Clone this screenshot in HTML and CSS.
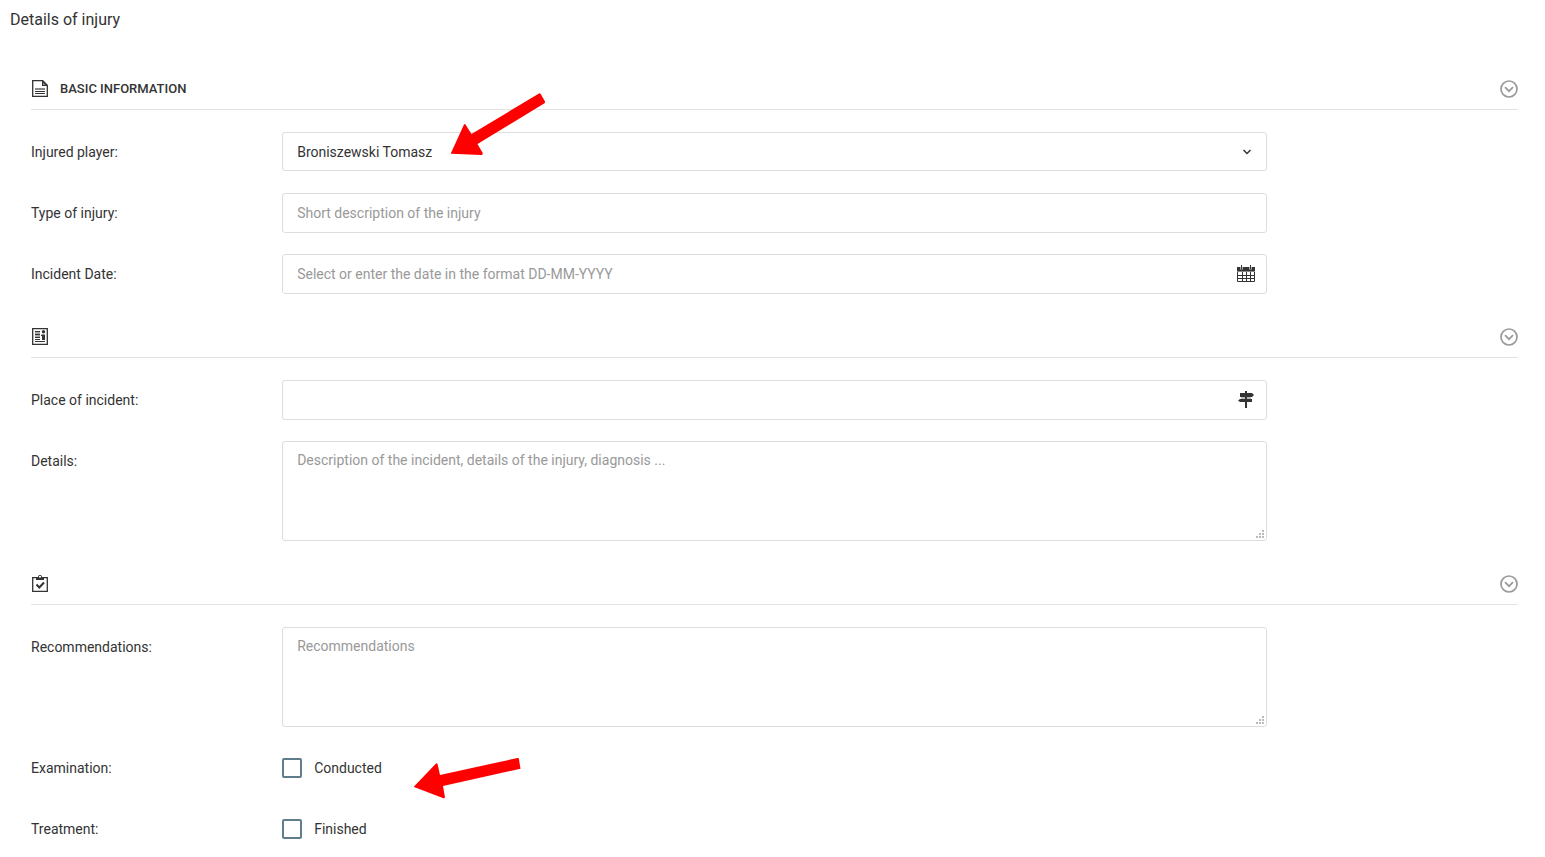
FILE: index.html
```html
<!DOCTYPE html>
<html lang="en">
<head>
    <meta charset="UTF-8">
    <meta name="viewport" content="width=device-width, initial-scale=1.0">
    <title>Details of injury</title>
    <link rel="stylesheet" href="styles.css">
</head>
<body>
    <h1 class="page-title">Details of injury</h1>

    <form class="injury-form">
        <!-- Basic information -->
        <section class="form-section">
            <div class="section-header">
                <svg class="section-icon" viewBox="0 0 18 18" aria-hidden="true">
                    <path d="M1.700 .700h10l4.600 4.600v11H1.700z" fill="none" stroke="#333" stroke-width="1.300"/>
                    <path d="M11 .500v5.500h5.500z" fill="#333"/>
                    <path d="M12.200 3v1.800H14z" fill="#ddd"/>
                    <path d="M4 8h10v2H4z" fill="#888"/>
                    <path d="M4 11h10v1H4zM4 13h10v1H4z" fill="#333"/>
                </svg>
                <h2>Basic information</h2>
                <button type="button" class="collapse-btn" aria-label="Collapse">
                    <svg viewBox="0 0 18 18" aria-hidden="true">
                        <circle cx="9" cy="9" r="8"/>
                        <path d="M5 7.200l4 4 4-4"/>
                    </svg>
                </button>
            </div>

            <div class="form-row">
                <label for="player">Injured player:</label>
                <div class="field">
                    <select id="player" name="player" class="control">
                        <option>Broniszewski Tomasz</option>
                    </select>
                    <svg class="field-icon" viewBox="0 0 18 18" aria-hidden="true">
                        <path d="M6.500 7l3.500 3.500L13.500 7" fill="none" stroke="#333" stroke-width="1.500"/>
                    </svg>
                </div>
            </div>
            <div class="form-row">
                <label for="injury-type">Type of injury:</label>
                <div class="field">
                    <input type="text" id="injury-type" name="injury-type" class="control" placeholder="Short description of the injury">
                </div>
            </div>
            <div class="form-row">
                <label for="incident-date">Incident Date:</label>
                <div class="field">
                    <input type="text" id="incident-date" name="incident-date" class="control" placeholder="Select or enter the date in the format DD-MM-YYYY">
                    <svg class="field-icon" viewBox="0 0 18 18" aria-hidden="true">
                        <path d="M0 2h18v4H0z" fill="#333"/>
                        <path d="M0 6h18v1H0z" fill="#888"/>
                        <path d="M3 2h3v2.500H3zM12 2h3v2.500h-3z" fill="#aaa"/>
                        <path d="M4 0h1v4H4zM13 0h1v4h-1z" fill="#333"/>
                        <path d="M.5 7v9.500h17V7M0 10.500h18M0 13.500h18M5.500 7v9.500M9.500 7v9.500M13.500 7v9.500" fill="none" stroke="#333"/>
                    </svg>
                </div>
            </div>
        </section>

        <!-- Incident -->
        <section class="form-section">
            <div class="section-header">
                <svg class="section-icon" viewBox="0 0 18 18" aria-hidden="true">
                    <path d="M1.700 .700h14.600v15.600H1.700z" fill="none" stroke="#333" stroke-width="1.300"/>
                    <path d="M4 3h5v1H4zM4 6h5v1H4zM4 9h5v1H4zM4 11h5v1H4zM4 13h10v1H4z" fill="#333"/>
                    <path d="M4 4h5v2H4zM4 7h5v2H4z" fill="#aaa"/>
                    <circle cx="12.500" cy="3.800" r="1.700" fill="#333"/>
                    <path d="M11 6.500h3V12h-3V8h-1V7z" fill="#333"/>
                </svg>
                <button type="button" class="collapse-btn" aria-label="Collapse">
                    <svg viewBox="0 0 18 18" aria-hidden="true">
                        <circle cx="9" cy="9" r="8"/>
                        <path d="M5 7.200l4 4 4-4"/>
                    </svg>
                </button>
            </div>

            <div class="form-row">
                <label for="place">Place of incident:</label>
                <div class="field">
                    <input type="text" id="place" name="place" class="control">
                    <svg class="field-icon" viewBox="0 0 18 18" aria-hidden="true">
                        <path d="M8 0h2v17H8zM3 2h12l2 2-2 2H3zM3 8h12v3H3L1 9.500z" fill="#333"/>
                        <path d="M4 6h4v2H4zM10 6h4v2h-4z" fill="#bbb"/>
                    </svg>
                </div>
            </div>
            <div class="form-row">
                <label for="details">Details:</label>
                <div class="field">
                    <textarea id="details" name="details" class="control" placeholder="Description of the incident, details of the injury, diagnosis ..."></textarea>
                </div>
            </div>
        </section>

        <!-- Recommendations -->
        <section class="form-section">
            <div class="section-header">
                <svg class="section-icon" viewBox="0 0 18 18" aria-hidden="true">
                    <path d="M1.700 2.700h14.600v13.600H1.700z" fill="none" stroke="#333" stroke-width="1.300"/>
                    <path d="M5 2h2a2 2 0 0 1 4 0h2v3H5z" fill="#333"/>
                    <path d="M8 1h2v1.500H8z" fill="#fff"/>
                    <path d="M5.500 9.500l2.800 3 4.700-5" fill="none" stroke="#333" stroke-width="2"/>
                </svg>
                <button type="button" class="collapse-btn" aria-label="Collapse">
                    <svg viewBox="0 0 18 18" aria-hidden="true">
                        <circle cx="9" cy="9" r="8"/>
                        <path d="M5 7.200l4 4 4-4"/>
                    </svg>
                </button>
            </div>

            <div class="form-row">
                <label for="recommendations">Recommendations:</label>
                <div class="field">
                    <textarea id="recommendations" name="recommendations" class="control" placeholder="Recommendations"></textarea>
                </div>
            </div>
            <div class="form-row">
                <span class="row-label">Examination:</span>
                <div class="field">
                    <label class="check"><input type="checkbox" name="examination">Conducted</label>
                </div>
            </div>
            <div class="form-row">
                <span class="row-label">Treatment:</span>
                <div class="field">
                    <label class="check"><input type="checkbox" name="treatment">Finished</label>
                </div>
            </div>
        </section>
    </form>

    <!-- Pointer arrows -->
    <svg class="arrow arrow-player" viewBox="0 0 96 64" aria-hidden="true">
        <path d="M1 60L14 31.500q.8-1 1.500 0L21.500 41 89 0.500q1-.5 1.700.4l4.300 7.600q.3 1-.5 1.700L27.500 51l5.300 9.200q.2 1.500-1.300 1.800L1 60.700z"/>
    </svg>
    <svg class="arrow arrow-exam" viewBox="0 0 108 42" aria-hidden="true">
        <path d="M0 28.500L22 5.500q1-.8 1.500.2L26 17 103.500 0q1-.2 1.300.6l1.700 10.100L29 28l2 11.500q-.3 1-1.500.7L0 29z"/>
    </svg>
</body>
</html>
```

FILE: styles.css
```css
* {
    box-sizing: border-box;
}

body {
    font-family: Roboto, Arial, sans-serif;
    font-size: 14px;
    line-height: 20px;
    color: #333;
    background-color: #fff;
    margin: 0;
    position: relative;
}

.page-title {
    margin: 0;
    padding: 10px 10px 0;
    font-size: 16px;
    font-weight: 400;
}

.injury-form {
    padding: 37px 27px 0 31px;
}

/* Section header */
.section-header {
    display: flex;
    align-items: center;
    gap: 11px;
    height: 43px;
    padding-top: 2px;
    margin-bottom: 22px;
    border-bottom: 1px solid #e2e2e2;
}

.section-header h2 {
    margin: 0;
    font-size: 13px;
    font-weight: 500;
    text-transform: uppercase;
}

.section-icon {
    width: 18px;
    height: 18px;
}

.collapse-btn {
    display: flex;
    margin-left: auto;
    padding: 0;
    border: none;
    background: none;
    cursor: pointer;
}

.collapse-btn svg {
    width: 18px;
    height: 18px;
    fill: none;
    stroke: #999;
    stroke-width: 1.7;
}

/* Rows */
.form-row {
    display: grid;
    grid-template-columns: 2fr 8fr 2fr;
    margin: 0 -10px 21px;
}

.form-row > label,
.row-label {
    padding: 10px;
}

.field {
    display: flex;
    min-height: 40px;
    margin: 0 10px;
    position: relative;
}

.control {
    width: 100%;
    height: 40px;
    padding: 8px 14px;
    border: 1px solid #ddd;
    border-radius: 3px;
    background-color: #fff;
    color: #333;
    font: inherit;
    appearance: none;
}

.control::placeholder {
    color: #999;
}

select.control {
    height: 39px;
}

textarea.control {
    height: 100px;
    resize: vertical;
}

textarea.control::-webkit-resizer {
    background-image:
        linear-gradient(#bbb, #bbb),
        linear-gradient(#bbb, #bbb), linear-gradient(#bbb, #bbb),
        linear-gradient(#bbb, #bbb), linear-gradient(#bbb, #bbb), linear-gradient(#bbb, #bbb);
    background-size: 2px 2px;
    background-position: 11px 5px, 8px 8px, 11px 8px, 5px 11px, 8px 11px, 11px 11px;
    background-repeat: no-repeat;
}

.field-icon {
    position: absolute;
    top: 11px;
    right: 12px;
    width: 18px;
    height: 18px;
    pointer-events: none;
}

/* Checkboxes */
.check {
    display: flex;
    align-items: center;
    gap: 12px;
}

.check input {
    appearance: none;
    width: 20px;
    height: 20px;
    margin: 0;
    border: 2px solid #607d8b;
    border-radius: 2px;
}

.check input:checked {
    background-color: #607d8b;
}

/* Arrows */
.arrow {
    position: absolute;
    fill: #f00;
    pointer-events: none;
}

.arrow-player {
    top: 93px;
    left: 450px;
    width: 96px;
    height: 64px;
}

.arrow-exam {
    top: 758px;
    left: 414px;
    width: 108px;
    height: 42px;
}
```
